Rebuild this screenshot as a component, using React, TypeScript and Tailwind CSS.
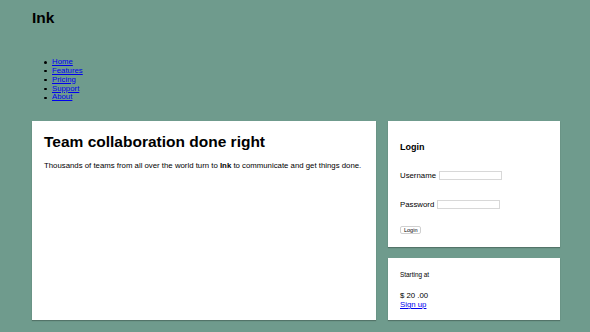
export default function App() {
  return (
    <div
      className="min-h-screen bg-[#6f9b8d] pl-[32px] pr-[30px] pt-[9px] pb-[12px] text-black text-[7.8px] leading-[9px]"
      style={{ fontFamily: '"Liberation Sans", Arial, sans-serif' }}
    >
      <header>
        <h1 className="text-[15.5px] leading-[18px] font-bold">Ink</h1>
        <nav className="mt-[30.8px]">
          <ul className="pl-[12px] leading-[8.9px]">
            {["Home", "Features", "Pricing", "Support", "About"].map((item) => (
              <li key={item} className="flex items-center">
                <span className="mr-[5.5px] h-[2.5px] w-[2.5px] rounded-full bg-black" />
                <a href="#" className="text-[#0000ee] underline">
                  {item}
                </a>
              </li>
            ))}
          </ul>
        </nav>
      </header>

      <main className="mt-[18.5px] flex gap-[12px]">
        <section className="flex-1 bg-white px-[12px] pt-[12px] shadow-[0_1px_1px_rgba(0,0,0,0.25)]">
          <h2 className="text-[15.5px] leading-[18px] font-bold">Team collaboration done right</h2>
          <p className="mt-[10.5px]">
            Thousands of teams from all over the world turn to <strong>Ink</strong> to communicate and get things done.
          </p>
        </section>

        <aside className="flex w-[172px] flex-col gap-[11px]">
          <div className="bg-white px-[12px] pt-[20.75px] pb-[12.5px] shadow-[0_1px_1px_rgba(0,0,0,0.25)]">
            <h3 className="text-[9px] leading-[10.5px] font-bold">Login</h3>
            <form>
              <div className="mt-[19.25px] flex h-[9px] items-center">
                <label>Username</label>
                <input type="text" className="ml-[3px] h-[9px] w-[63px] border border-[#d8d8d8] bg-white" />
              </div>
              <div className="mt-[20px] flex h-[9px] items-center">
                <label>Password</label>
                <input type="password" className="ml-[3px] h-[9px] w-[63px] border border-[#d8d8d8] bg-white" />
              </div>
              <button
                type="button"
                className="mt-[17px] block h-[8px] rounded-[2px] border border-[#d0d0d0] bg-white px-[3px] text-[5.5px] leading-[6px]"
              >
                Login
              </button>
            </form>
          </div>

          <div className="flex-1 bg-white px-[12px] pt-[13.25px] pb-[10.75px] shadow-[0_1px_1px_rgba(0,0,0,0.25)]">
            <p className="text-[6.4px] leading-[7.5px]">Starting at</p>
            <div className="mt-[12.5px]">$ 20 .00</div>
            <a href="#" className="block text-[#0000ee] underline">
              Sign up
            </a>
          </div>
        </aside>
      </main>
    </div>
  );
}
